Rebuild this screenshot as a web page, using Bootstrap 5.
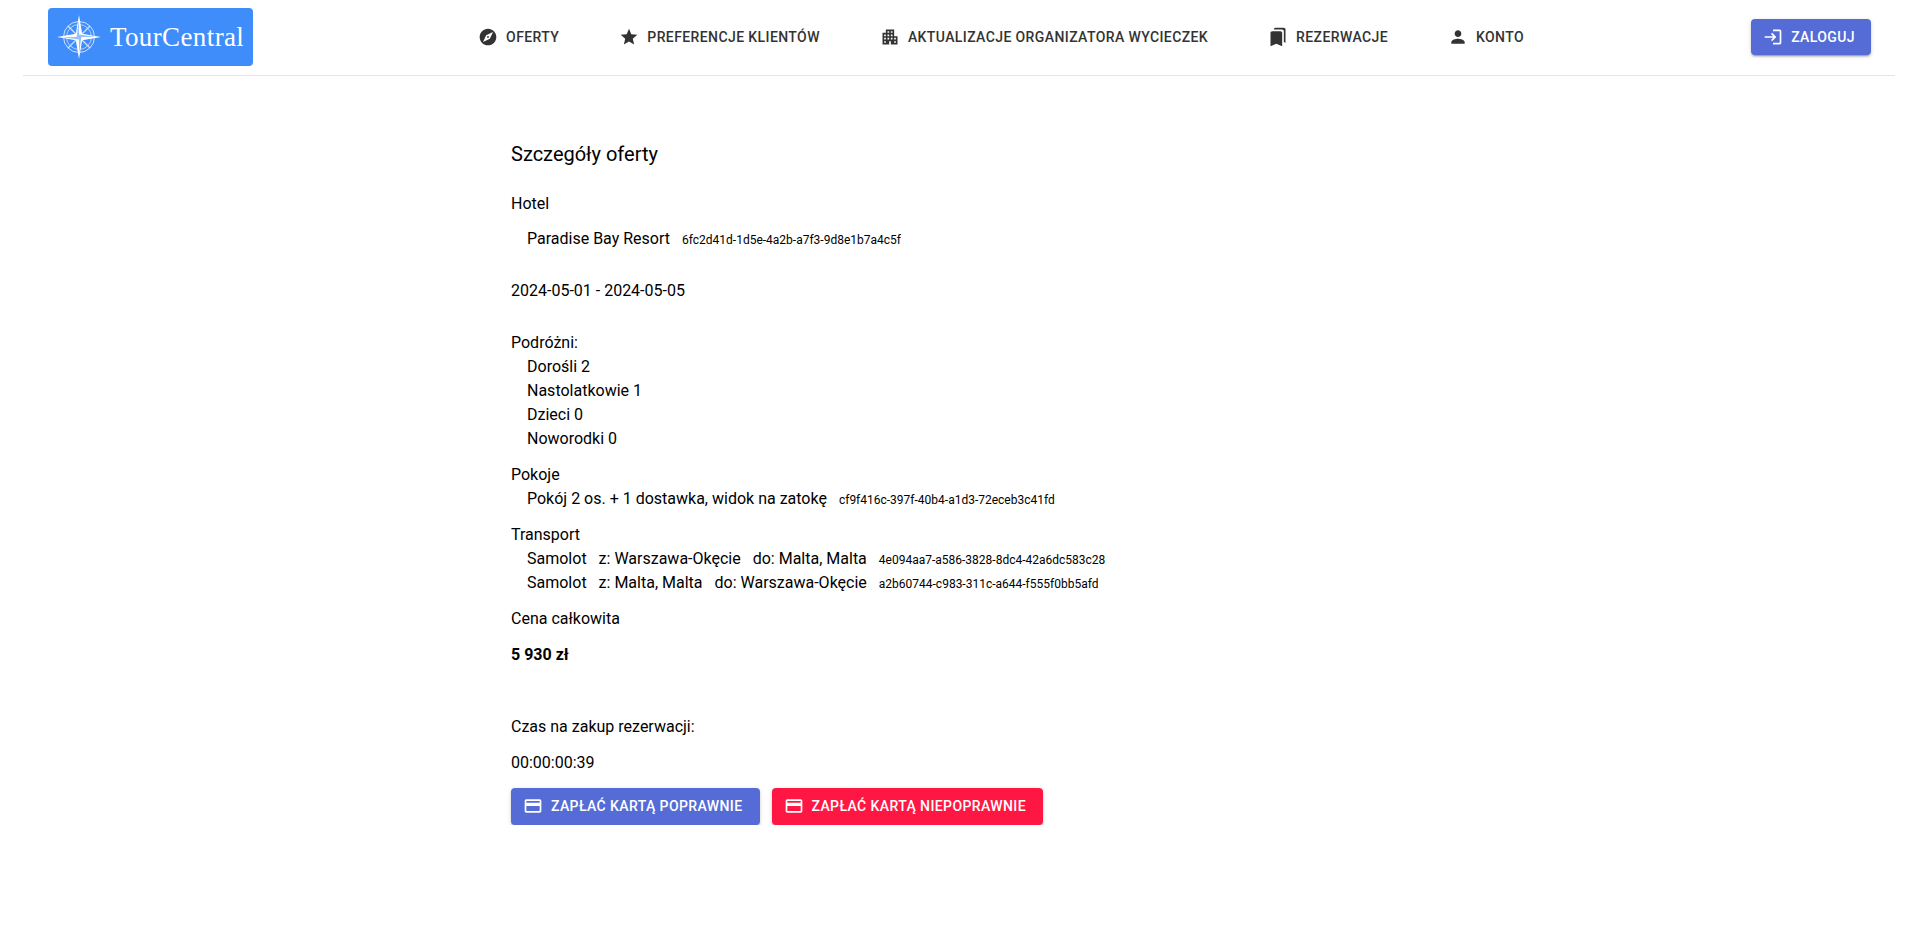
<!DOCTYPE html>
<html lang="pl">
<head>
<meta charset="utf-8">
<title>TourCentral</title>
<link href="https://cdn.jsdelivr.net/npm/bootstrap@5.3.0/dist/css/bootstrap.min.css" rel="stylesheet">
<style>
body{font-family:Roboto,"Liberation Sans",sans-serif;font-size:16px;line-height:24px;color:#000;background:#fff}
.top-bar{height:76px;margin:0 24px 0 23px;padding:0 24px 1px 25px;border-bottom:1px solid #e5e5e5}
.brand-box{width:205px;height:58px;background:#3f8cfb;border-radius:4px;color:#fff;padding-left:8px;gap:8px;text-decoration:none}
.brand-name{font-family:"Liberation Serif",serif;font-size:27px;letter-spacing:.38px;line-height:1}
.menu-row{gap:60px;margin-right:2px}
.menu-link{color:#333;font-size:14px;font-weight:500;letter-spacing:.4px;line-height:20px;text-decoration:none;gap:8px;white-space:nowrap}
.ico{width:20px;height:20px;fill:currentColor;flex:none}
.act-btn{height:36.5px;font-family:Roboto,sans-serif;font-size:14px;font-weight:500;letter-spacing:.4px;color:#fff;border:0;border-radius:4px;padding:0 16px 0 12px;gap:8px;white-space:nowrap;box-shadow:0 3px 1px -2px rgba(0,0,0,.2),0 2px 2px 0 rgba(0,0,0,.14),0 1px 5px 0 rgba(0,0,0,.12)}
.act-blue{background:#556cd6}
.act-red{background:#ff1744}
.pay-row{gap:12px}
.pay-row .act-btn{padding-right:17px}
.detail-wrap{width:897px;margin:62px auto 0 511px}
.detail-title{font-size:20px;font-weight:400;line-height:32px;margin:0 0 22px}
.row-line{margin:0 0 12px}
.row-tight{margin:0 0 11px}
.row-far{margin:0 0 28px}
.row-time{margin:0 0 13px}
.indent{padding-left:16px}
.id-text{font-size:12px;line-height:1;margin-left:12px}
.sp{margin-left:12px}
.row-gap-big{margin-bottom:48px}
</style>
</head>
<body>
<header class="top-bar d-flex align-items-center justify-content-between">
  <a class="brand-box d-flex align-items-center" href="#">
    <svg width="46" height="46" viewBox="-23 -23 46 46" aria-hidden="true">
      <g fill="none" stroke="#fff" opacity=".75">
        <circle r="15.5" stroke-width="1"/>
        <circle r="12.5" stroke-width=".8"/>
        <path d="M-11-11 11 11M-11 11 11-11" stroke-width="1.2"/>
      </g>
      <path fill="#fff" d="M0-22 3.2-3.2 22 0 3.2 3.2 0 22-3.2 3.2-22 0-3.2-3.2z"/>
      <path fill="#3f8cfb" d="M0-17V0H-2.4zM17 0H0V-2.4zM0 17V0H2.4zM-17 0H0V2.4z" opacity=".55"/>
    </svg>
    <span class="brand-name">TourCentral</span>
  </a>
  <nav class="menu-row d-flex align-items-center">
    <a class="menu-link d-inline-flex align-items-center" href="#"><svg class="ico" viewBox="0 0 24 24"><path d="M12 10.9c-.61 0-1.1.49-1.1 1.1s.49 1.1 1.1 1.1c.61 0 1.1-.49 1.1-1.1s-.49-1.1-1.1-1.1zM12 2C6.48 2 2 6.48 2 12s4.48 10 10 10 10-4.48 10-10S17.52 2 12 2zm2.19 12.19L6 18l3.81-8.19L18 6l-3.81 8.19z"/></svg>OFERTY</a>
    <a class="menu-link d-inline-flex align-items-center" href="#"><svg class="ico" viewBox="0 0 24 24"><path d="M12 17.27 18.18 21l-1.64-7.03L22 9.24l-7.19-.61L12 2 9.19 8.63 2 9.24l5.46 4.73L5.82 21z"/></svg>PREFERENCJE KLIENTÓW</a>
    <a class="menu-link d-inline-flex align-items-center" href="#"><svg class="ico" viewBox="0 0 24 24"><path d="M17 11V3H7v4H3v14h8v-4h2v4h8V11h-4zM7 19H5v-2h2v2zm0-4H5v-2h2v2zm0-4H5V9h2v2zm4 4H9v-2h2v2zm0-4H9V9h2v2zm0-4H9V5h2v2zm4 8h-2v-2h2v2zm0-4h-2V9h2v2zm0-4h-2V5h2v2zm4 12h-2v-2h2v2zm0-4h-2v-2h2v2z"/></svg>AKTUALIZACJE ORGANIZATORA WYCIECZEK</a>
    <a class="menu-link d-inline-flex align-items-center" href="#"><svg class="ico" viewBox="0 0 24 24"><path d="M19 18l2 1V3c0-1.1-.9-2-2-2H8.99C7.89 1 7 1.9 7 3h10c1.1 0 2 .9 2 2v13zM15 5H5c-1.1 0-2 .9-2 2v16l7-3 7 3V7c0-1.1-.9-2-2-2z"/></svg>REZERWACJE</a>
    <a class="menu-link d-inline-flex align-items-center" href="#"><svg class="ico" viewBox="0 0 24 24"><path d="M12 12c2.21 0 4-1.79 4-4s-1.79-4-4-4-4 1.79-4 4 1.79 4 4 4zm0 2c-2.67 0-8 1.34-8 4v2h16v-2c0-2.66-5.33-4-8-4z"/></svg>KONTO</a>
  </nav>
  <button class="act-btn act-blue d-inline-flex align-items-center" type="button"><svg class="ico" viewBox="0 0 24 24"><path d="M11 7 9.6 8.4l2.6 2.6H2v2h10.2l-2.6 2.6L11 17l5-5-5-5zm9 12h-8v2h8c1.1 0 2-.9 2-2V5c0-1.1-.9-2-2-2h-8v2h8v14z"/></svg>ZALOGUJ</button>
</header>
<main class="detail-wrap">
  <h2 class="detail-title">Szczegóły oferty</h2>
  <p class="row-tight">Hotel</p>
  <p class="row-far indent">Paradise Bay Resort<span class="id-text">6fc2d41d-1d5e-4a2b-a7f3-9d8e1b7a4c5f</span></p>
  <p class="row-far">2024-05-01 - 2024-05-05</p>
  <div class="row-line">
    <div>Podróżni:</div>
    <div class="indent">Dorośli 2</div>
    <div class="indent">Nastolatkowie 1</div>
    <div class="indent">Dzieci 0</div>
    <div class="indent">Noworodki 0</div>
  </div>
  <div class="row-line">
    <div>Pokoje</div>
    <div class="indent">Pokój 2 os. + 1 dostawka, widok na zatokę<span class="id-text">cf9f416c-397f-40b4-a1d3-72eceb3c41fd</span></div>
  </div>
  <div class="row-line">
    <div>Transport</div>
    <div class="indent">Samolot<span class="sp">z: Warszawa-Okęcie</span><span class="sp">do: Malta, Malta</span><span class="id-text">4e094aa7-a586-3828-8dc4-42a6dc583c28</span></div>
    <div class="indent">Samolot<span class="sp">z: Malta, Malta</span><span class="sp">do: Warszawa-Okęcie</span><span class="id-text">a2b60744-c983-311c-a644-f555f0bb5afd</span></div>
  </div>
  <p class="row-line">Cena całkowita</p>
  <p class="row-gap-big fw-bold">5 930 zł</p>
  <p class="row-line">Czas na zakup rezerwacji:</p>
  <p class="row-time">00:00:00:39</p>
  <div class="pay-row d-flex">
    <button class="act-btn act-blue d-inline-flex align-items-center" type="button"><svg class="ico" viewBox="0 0 24 24"><path d="M20 4H4c-1.11 0-1.99.89-1.99 2L2 18c0 1.11.89 2 2 2h16c1.11 0 2-.89 2-2V6c0-1.11-.89-2-2-2zm0 14H4v-6h16v6zm0-10H4V6h16v2z"/></svg>ZAPŁAĆ KARTĄ POPRAWNIE</button>
    <button class="act-btn act-red d-inline-flex align-items-center" type="button"><svg class="ico" viewBox="0 0 24 24"><path d="M20 4H4c-1.11 0-1.99.89-1.99 2L2 18c0 1.11.89 2 2 2h16c1.11 0 2-.89 2-2V6c0-1.11-.89-2-2-2zm0 14H4v-6h16v6zm0-10H4V6h16v2z"/></svg>ZAPŁAĆ KARTĄ NIEPOPRAWNIE</button>
  </div>
</main>
<script src="https://cdn.jsdelivr.net/npm/bootstrap@5.3.0/dist/js/bootstrap.bundle.min.js"></script>
</body>
</html>
